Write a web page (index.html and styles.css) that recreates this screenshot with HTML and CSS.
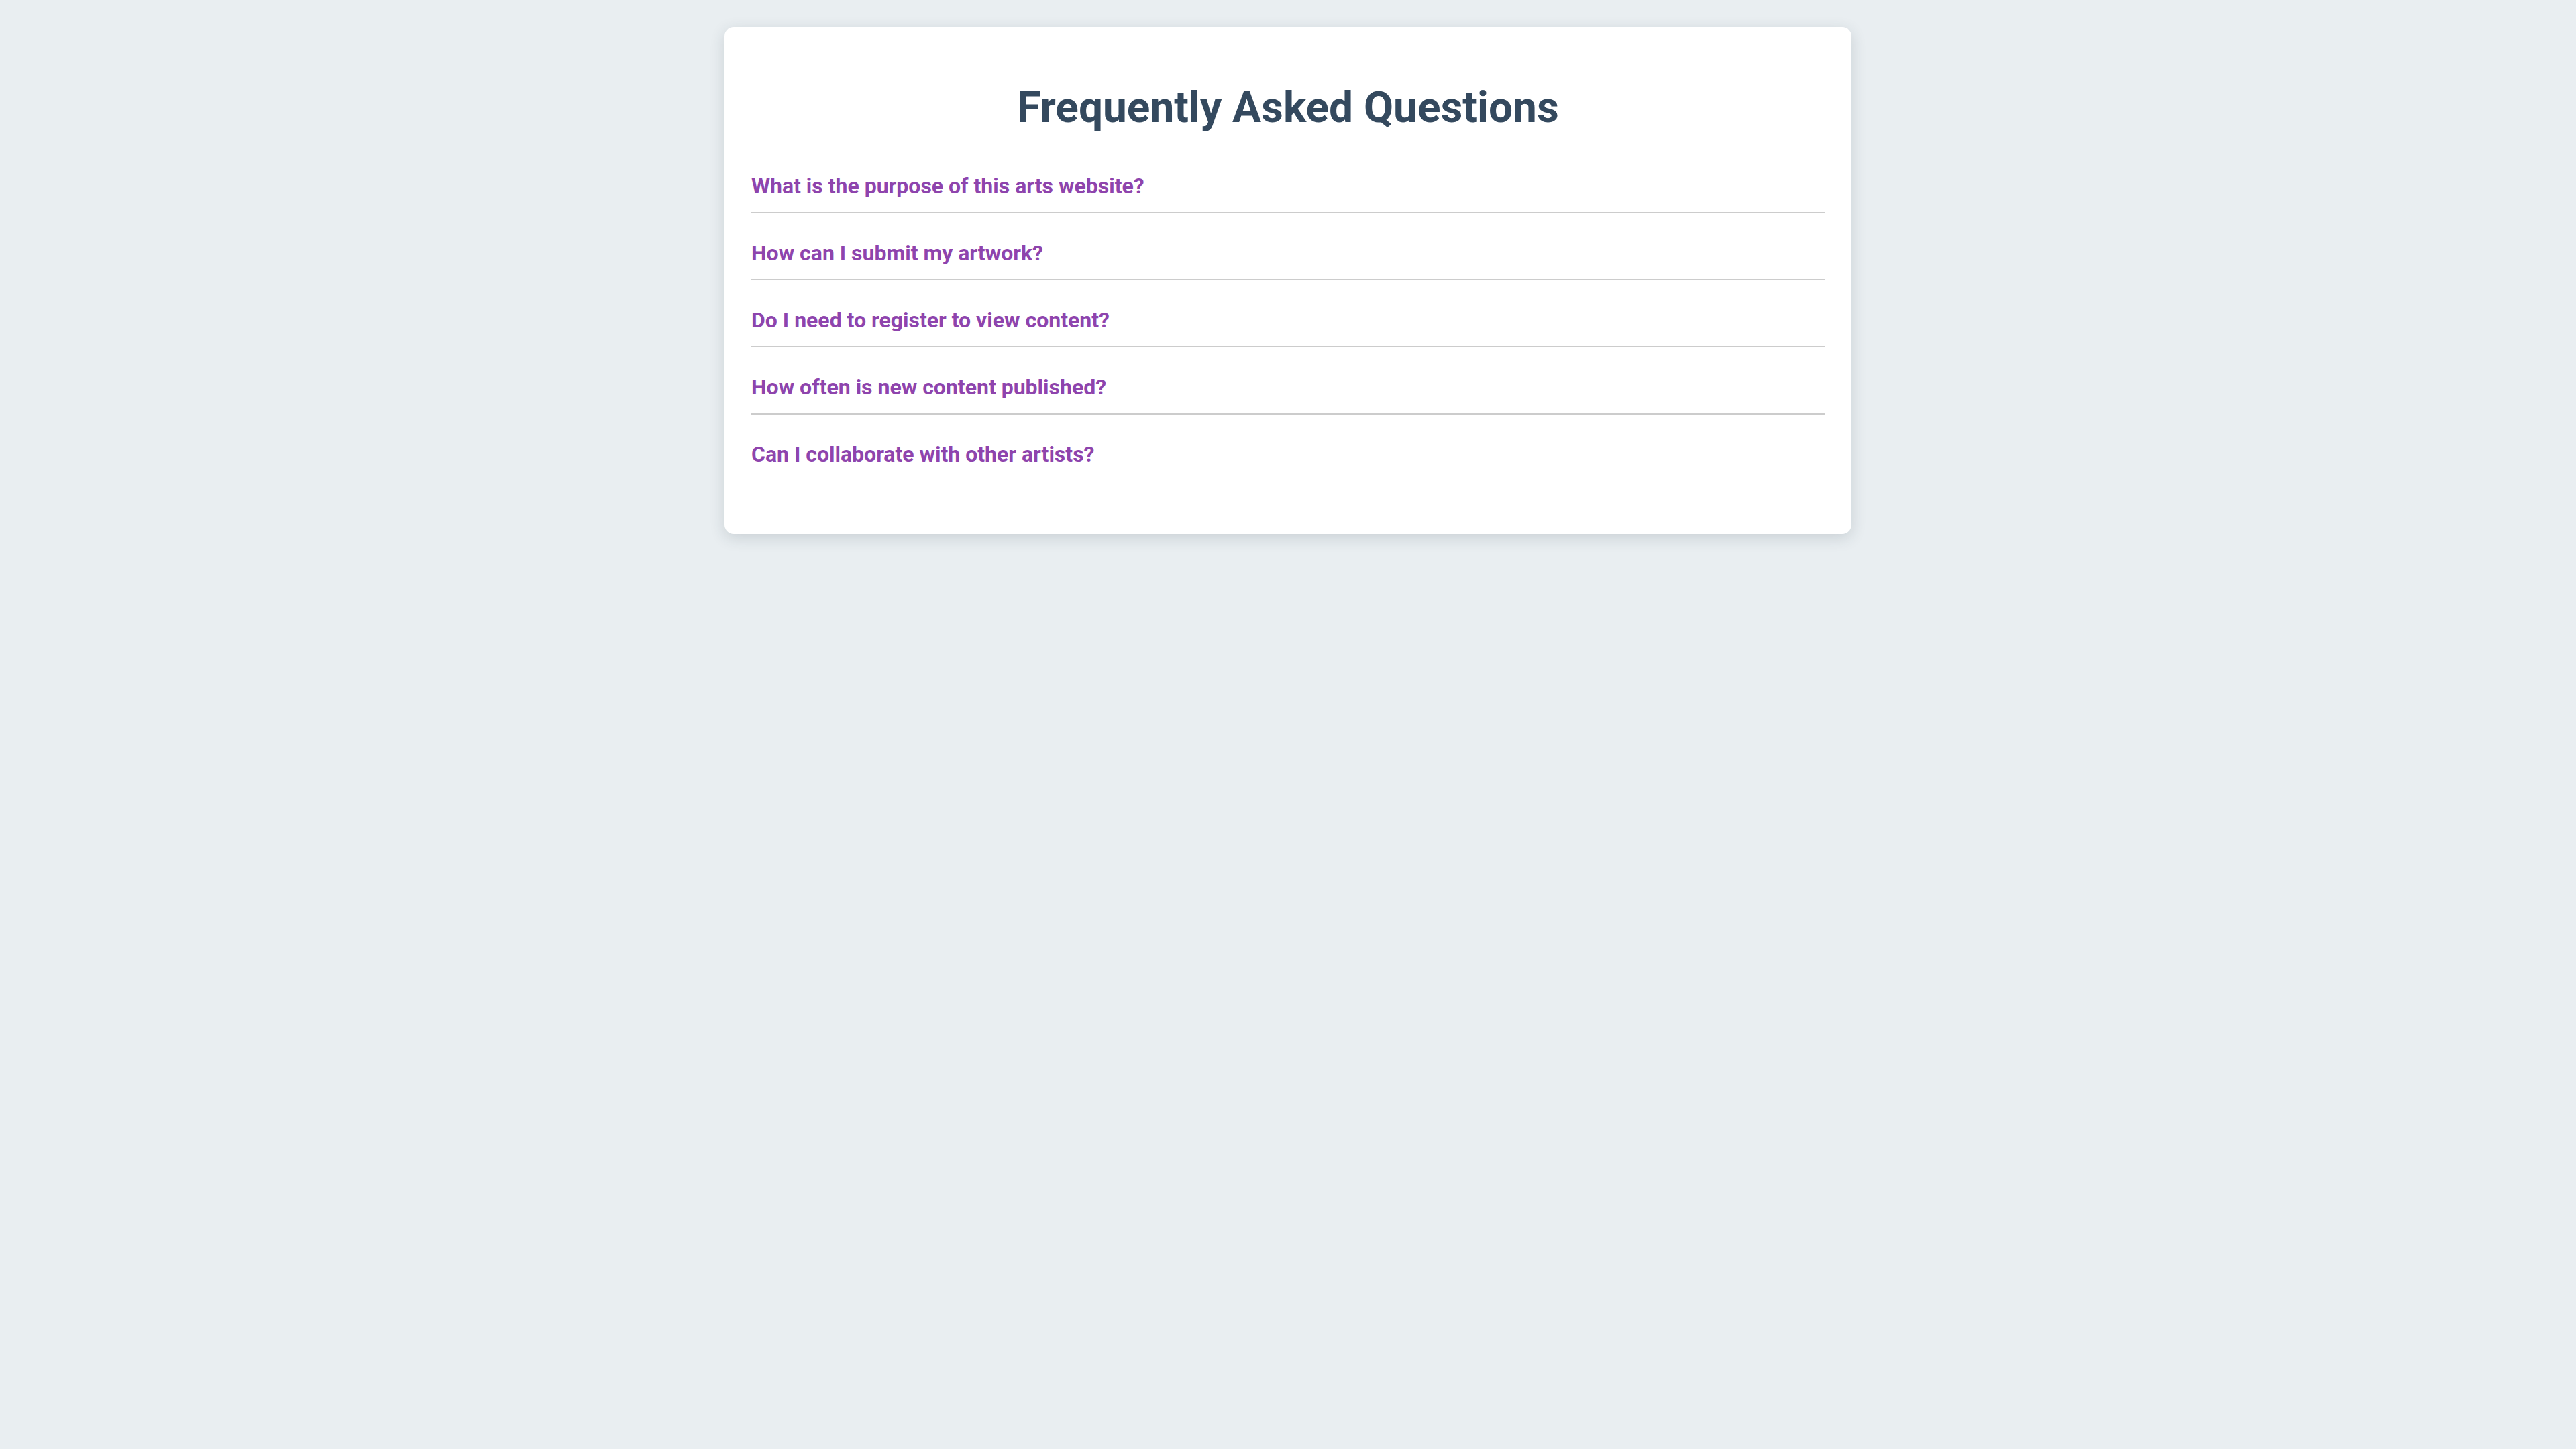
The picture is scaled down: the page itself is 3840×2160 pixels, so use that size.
FILE: index.html
```html
<!DOCTYPE html>
<html lang="en">
<head>
<meta charset="utf-8">
<title>Frequently Asked Questions</title>
<link rel="stylesheet" href="styles.css">
</head>
<body>
<main class="faq-card">
  <h1 class="faq-title">Frequently Asked Questions</h1>
  <div class="faq-list">
    <div class="faq-item"><div class="faq-question">What is the purpose of this arts website?</div></div>
    <div class="faq-item"><div class="faq-question">How can I submit my artwork?</div></div>
    <div class="faq-item"><div class="faq-question">Do I need to register to view content?</div></div>
    <div class="faq-item"><div class="faq-question">How often is new content published?</div></div>
    <div class="faq-item"><div class="faq-question">Can I collaborate with other artists?</div></div>
  </div>
</main>
</body>
</html>
```
FILE: styles.css
```css
html, body {
  margin: 0;
  padding: 0;
}
body {
  background: #e9eef1;
  font-family: Roboto, "Liberation Sans", Arial, sans-serif;
  padding: 40px 0;
}
.faq-card {
  box-sizing: content-box;
  max-width: 1600px;
  margin: 0 auto;
  padding: 40px 40px 60px;
  background: #ffffff;
  border-radius: 14px;
  box-shadow: 0 6px 22px rgba(40, 55, 70, 0.16);
}
.faq-title {
  margin: 43px 0 40px;
  font-size: 64px;
  font-weight: 700;
  line-height: normal;
  text-align: center;
  color: #34495e;
}
.faq-item {
  padding: 20px 0;
  margin-bottom: 20px;
  border-bottom: 2px solid #cccccc;
}
.faq-item:last-child {
  border-bottom: none;
}
.faq-question {
  font-size: 32px;
  line-height: 38px;
  font-weight: 700;
  color: #8e44ad;
  cursor: pointer;
}
```
